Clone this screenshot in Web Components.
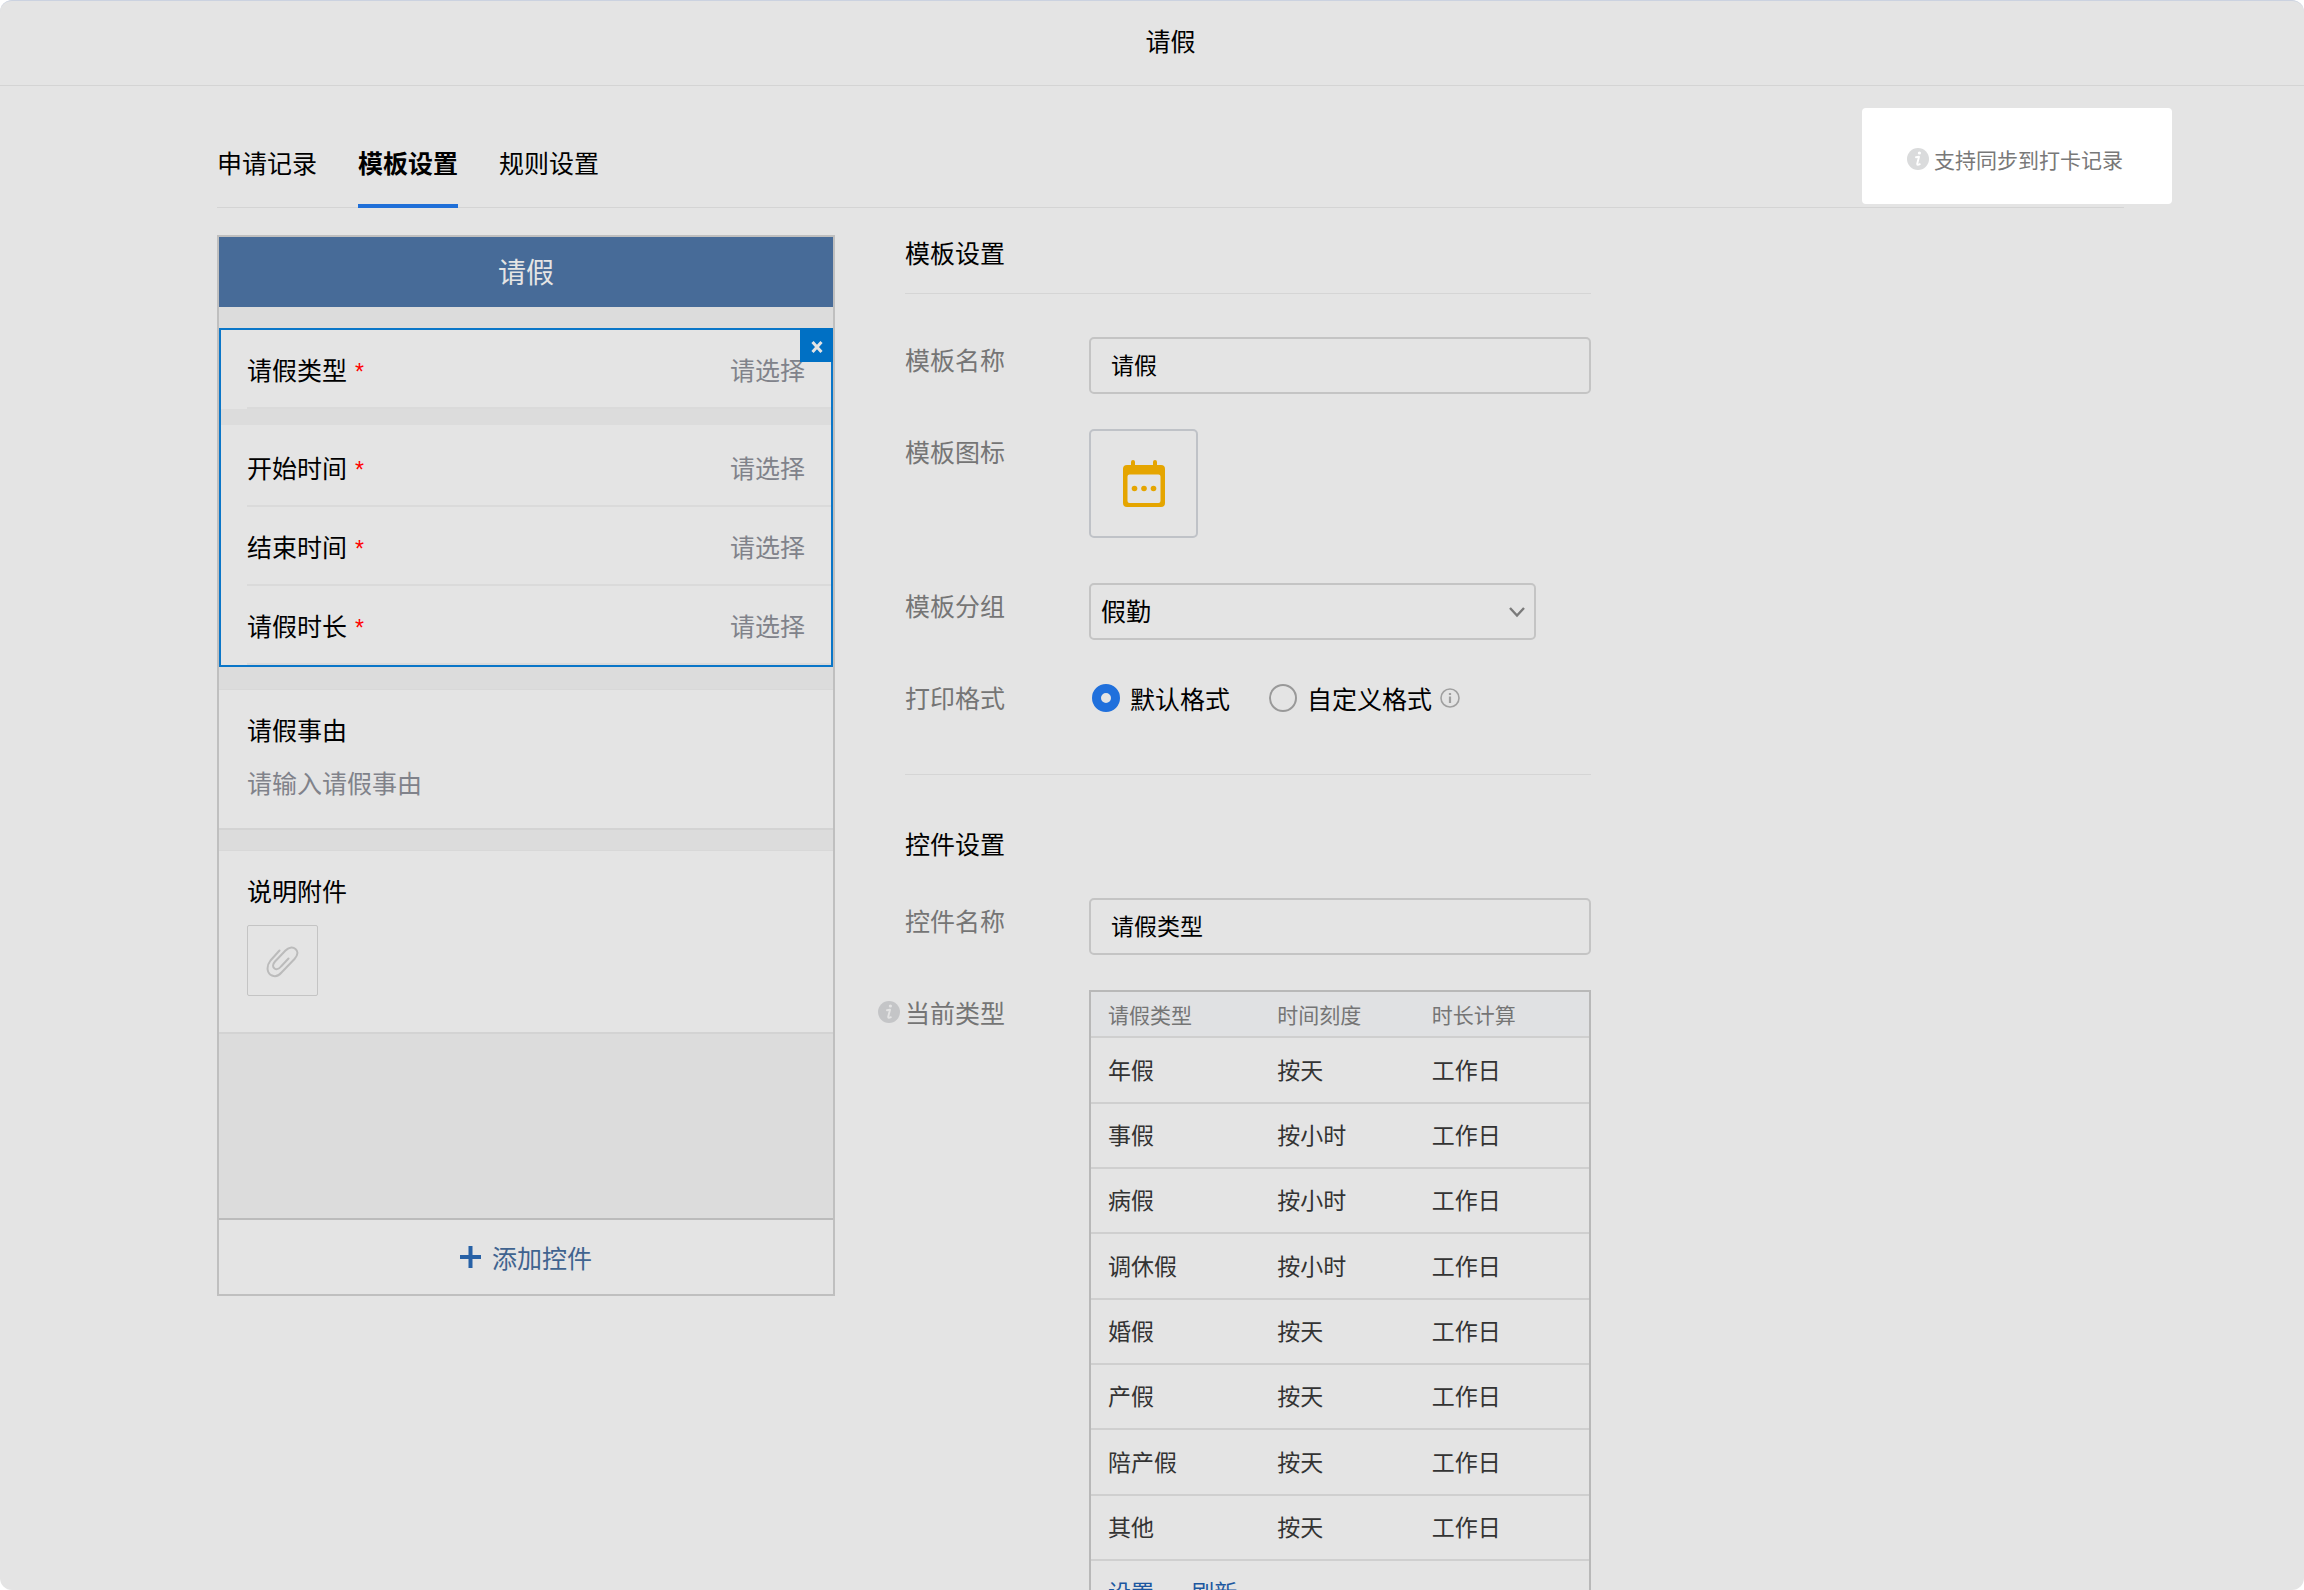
<!DOCTYPE html>
<html lang="zh-CN">
<head>
<meta charset="utf-8">
<title>请假</title>
<style>
    body {
        margin: 0;
        background: #fff;
        color: #000;
        font-family: "Noto Sans CJK SC", "Liberation Sans", sans-serif;
        font-size: 25px;
        line-height: 34px;
    }
</style>
</head>
<body>
<leave-dialog>
    <span slot="title">请假</span>
    <tab-bar slot="tabs"></tab-bar>
    <form-preview></form-preview>
    <settings-panel></settings-panel>
</leave-dialog>

<script>
class LeaveDialog extends HTMLElement {
    constructor() {
        super();
        this.attachShadow({ mode: 'open' });
        this.shadowRoot.innerHTML = `
            <style>
                :host {
                    display: block;
                    box-sizing: border-box;
                    height: 100vh;
                    overflow: hidden;
                    border-radius: 12px;
                    border-top: 1px solid #cbd2e0;
                    background: #e4e4e4;
                }
                header {
                    display: flex;
                    align-items: center;
                    justify-content: center;
                    box-sizing: border-box;
                    height: 85px;
                    padding: 0 180px 6px 217px;
                    border-bottom: 1px solid #d4d4d4;
                }
                h1 {
                    margin: 0;
                    font-size: 25px;
                    font-weight: 400;
                }
                .tabs {
                    padding: 0 180px 27px 217px;
                }
                main {
                    display: grid;
                    grid-template-columns: 618px minmax(0, 686px);
                    column-gap: 70px;
                    align-items: start;
                    padding: 0 180px 0 217px;
                }
            </style>
            <header><h1><slot name="title"></slot></h1></header>
            <div class="tabs"><slot name="tabs"></slot></div>
            <main><slot></slot></main>
        `;
    }
}

class InfoIcon extends HTMLElement {
    constructor() {
        super();
        this.attachShadow({ mode: 'open' });
        this.shadowRoot.innerHTML = `
            <style>
                :host {
                    display: inline-flex;
                    flex: none;
                    color: #c4c5c7;
                }
                svg {
                    display: block;
                }
            </style>
            <svg width="22" height="22" viewBox="0 0 22 22" aria-hidden="true">
                <circle cx="11" cy="11" r="11" fill="currentColor"/>
                <circle cx="12.4" cy="5" r="1.6" fill="var(--mark, #e4e4e4)"/>
                <path d="M9 9.300 12 8.800 10.200 15.800Q10 17.600 12.800 16.200" fill="none" stroke="var(--mark, #e4e4e4)" stroke-width="1.900" stroke-linecap="round" stroke-linejoin="round"/>
            </svg>
        `;
    }
}

class TabBar extends HTMLElement {
    constructor() {
        super();
        this.attachShadow({ mode: 'open' });
        this.shadowRoot.innerHTML = `
            <style>
                :host {
                    display: block;
                }
                nav {
                    display: flex;
                    align-items: flex-end;
                    gap: 41px;
                    height: 121px;
                    border-bottom: 1px solid #d4d4d4;
                }
                button {
                    margin: 0 0 -1px;
                    padding: 0 0 25px;
                    border: 0;
                    border-bottom: 4px solid transparent;
                    background: none;
                    color: inherit;
                    font: inherit;
                    cursor: pointer;
                }
                .active {
                    border-color: #1f6fd8;
                    font-weight: 700;
                }
                .note {
                    display: flex;
                    align-items: center;
                    gap: 5px;
                    box-sizing: border-box;
                    height: 96px;
                    margin: 0 -48px 3px auto;
                    padding: 6px 49px 0 45px;
                    border-radius: 4px;
                    background: #fff;
                    color: #787878;
                    font-size: 21px;
                    --mark: #fff;
                }
                .note info-icon {
                    color: #dadbdc;
                }
            </style>
            <nav>
                <button type="button">申请记录</button>
                <button type="button" class="active">模板设置</button>
                <button type="button">规则设置</button>
                <div class="note"><info-icon></info-icon><span>支持同步到打卡记录</span></div>
            </nav>
        `;
    }
}

class PreviewRow extends HTMLElement {
    constructor() {
        super();
        this.attachShadow({ mode: 'open' });
        this.shadowRoot.innerHTML = `
            <style>
                :host {
                    display: block;
                    padding-left: 26px;
                    background: #e4e4e4;
                }
                .row {
                    display: flex;
                    align-items: center;
                    box-sizing: border-box;
                    height: 79px;
                    padding-right: 26px;
                    border-bottom: 2px solid #dadada;
                }
                .star {
                    margin-left: 8px;
                    padding-top: 7px;
                    color: #f00;
                    font-family: "Liberation Sans", sans-serif;
                    font-size: 23px;
                }
                .hint {
                    margin-left: auto;
                    color: #80828a;
                }
            </style>
            <div class="row">
                <slot></slot><span class="star">*</span>
                <span class="hint">请选择</span>
            </div>
        `;
    }
}

class FormPreview extends HTMLElement {
    constructor() {
        super();
        this.attachShadow({ mode: 'open' });
        this.shadowRoot.innerHTML = `
            <style>
                :host {
                    display: block;
                    border: 2px solid #bfbfbf;
                    background: #dcdcdc;
                }
                h2, h3 {
                    margin: 0;
                    font-size: 25px;
                    font-weight: 400;
                }
                h2 {
                    height: 70px;
                    margin-bottom: 21px;
                    background: #476b98;
                    color: #e4e4e4;
                    font-size: 28px;
                    line-height: 68px;
                    text-align: center;
                }
                .selected {
                    position: relative;
                    border: 2px solid #0a76c8;
                }
                .group {
                    margin-top: 16px;
                    padding-top: 3px;
                    background: #e4e4e4;
                }
                .close {
                    position: absolute;
                    top: -2px;
                    right: -2px;
                    display: flex;
                    align-items: center;
                    justify-content: center;
                    width: 33px;
                    height: 34px;
                    padding: 4px 0 0;
                    border: 0;
                    background: #0070c4;
                    cursor: pointer;
                }
                section {
                    box-sizing: border-box;
                    margin-top: 20px;
                    padding: 22px 28px 0;
                    border-top: 1px solid #d8d8d8;
                    border-bottom: 2px solid #d3d3d3;
                    background: #e4e4e4;
                }
                .reason {
                    margin-top: 22px;
                    padding-bottom: 29px;
                }
                .reason p {
                    margin: 19px 0 0;
                    color: #80828a;
                }
                .files {
                    padding-bottom: 36px;
                }
                .attach {
                    display: flex;
                    align-items: center;
                    justify-content: center;
                    width: 71px;
                    height: 71px;
                    margin-top: 18px;
                    padding: 0;
                    border: 1px solid #c4c4c4;
                    border-radius: 2px;
                    background: none;
                }
                .add {
                    display: flex;
                    align-items: center;
                    justify-content: center;
                    gap: 11px;
                    width: 100%;
                    height: 76px;
                    margin-top: 184px;
                    padding: 0;
                    border: 0;
                    border-top: 2px solid #bbb;
                    background: #e4e4e4;
                    color: #40638f;
                    font: inherit;
                    cursor: pointer;
                }
            </style>
            <h2>请假</h2>
            <div class="selected">
                <preview-row>请假类型</preview-row>
                <div class="group">
                    <preview-row>开始时间</preview-row>
                    <preview-row>结束时间</preview-row>
                    <preview-row>请假时长</preview-row>
                </div>
                <button type="button" class="close" aria-label="删除">
                    <svg width="12" height="12" viewBox="0 0 12 12"><path d="M1.5 1 10.5 11M10.5 1 1.5 11" stroke="#e4e4e4" stroke-width="3"/></svg>
                </button>
            </div>
            <section class="reason">
                <h3>请假事由</h3>
                <p>请输入请假事由</p>
            </section>
            <section class="files">
                <h3>说明附件</h3>
                <button type="button" class="attach" aria-label="添加附件">
                    <svg width="34" height="34" viewBox="0 0 34 34" fill="none" stroke="#bbb" stroke-width="2" stroke-linecap="round" stroke-linejoin="round">
                        <path d="M13.5 6.5 4.5 16.5C-.5 23 1.5 30 6 31.5C9.5 33 13 31.5 15.5 28.5L28.5 15C32.5 10.5 32 7 29.5 5C26.5 2.5 22.5 3.5 19.5 6.5L9 17.5C6.5 20.5 6.5 23 8.5 24.5C10.5 26 13 25 15 22.5L22.5 14.5"/>
                    </svg>
                </button>
            </section>
            <button type="button" class="add">
                <svg width="21" height="22" viewBox="0 0 21 22" aria-hidden="true"><path d="M10.5 0V22M0 11H21" stroke="#2761a6" stroke-width="4"/></svg>
                添加控件
            </button>
        `;
    }
}

// label on the left, control on the right
class FieldRow extends HTMLElement {
    constructor() {
        super();
        this.attachShadow({ mode: 'open' });
        this.shadowRoot.innerHTML = `
            <style>
                :host {
                    display: grid;
                    grid-template-columns: 184px minmax(0, 1fr);
                    align-items: start;
                    margin-bottom: 35px;
                }
                .label {
                    display: flex;
                    align-items: center;
                    padding-top: 5px;
                    color: #757575;
                }
                ::slotted(info-icon) {
                    margin: 0 5px 0 -27px;
                }
            </style>
            <div class="label"><slot name="label"></slot></div>
            <div><slot></slot></div>
        `;
    }
}

const TYPES = [
    ['年假', '按天'],
    ['事假', '按小时'],
    ['病假', '按小时'],
    ['调休假', '按小时'],
    ['婚假', '按天'],
    ['产假', '按天'],
    ['陪产假', '按天'],
    ['其他', '按天']
];

class TypeTable extends HTMLElement {
    constructor() {
        super();
        this.attachShadow({ mode: 'open' });
        this.shadowRoot.innerHTML = `
            <style>
                :host {
                    display: block;
                    border: 2px solid #b8b8b8;
                }
                table {
                    width: 100%;
                    border-collapse: collapse;
                    table-layout: fixed;
                    color: #333;
                    font-size: 23px;
                }
                th, td {
                    box-sizing: border-box;
                    height: 65px;
                    padding: 0 0 3px 17px;
                    border-bottom: 2px solid #cfcfcf;
                    text-align: left;
                }
                tbody tr:nth-child(3n + 1) td {
                    height: 66px;
                }
                th {
                    height: 45px;
                    padding-bottom: 0;
                    background: #e0e1e3;
                    color: #757575;
                    font-size: 21px;
                    font-weight: 400;
                }
                th:nth-child(1) {
                    width: 34%;
                }
                th:nth-child(2) {
                    width: 31%;
                }
                a {
                    margin-right: 32px;
                    color: #1c57a0;
                    text-decoration: none;
                }
            </style>
            <table>
                <thead><tr><th>请假类型</th><th>时间刻度</th><th>时长计算</th></tr></thead>
                <tbody>
                    ${TYPES.map(([name, unit]) => `<tr><td>${name}</td><td>${unit}</td><td>工作日</td></tr>`).join('')}
                </tbody>
                <tfoot><tr><td colspan="3"><a href="#">设置</a> <a href="#">刷新</a></td></tr></tfoot>
            </table>
        `;
    }
}

class SettingsPanel extends HTMLElement {
    constructor() {
        super();
        this.attachShadow({ mode: 'open' });
        this.shadowRoot.innerHTML = `
            <style>
                :host {
                    display: block;
                }
                h2 {
                    margin: 0 0 38px;
                    font-size: 25px;
                    font-weight: 400;
                }
                .top h2 {
                    margin-bottom: 43px;
                    padding-bottom: 24px;
                    border-bottom: 1px solid #d5d5d5;
                }
                .top {
                    margin-bottom: 51px;
                    padding-bottom: 18px;
                    border-bottom: 1px solid #d5d5d5;
                }
                input[type="text"], select {
                    display: block;
                    box-sizing: border-box;
                    width: 100%;
                    height: 57px;
                    padding: 0 20px 3px;
                    border: 2px solid #c4c4c4;
                    border-radius: 5px;
                    outline: 0;
                    background: none;
                    color: #000;
                    font: inherit;
                    font-size: 23px;
                }
                .select {
                    position: relative;
                    max-width: 447px;
                }
                select {
                    appearance: none;
                    padding: 0 10px 3px;
                    font-size: 25px;
                }
                .select svg {
                    position: absolute;
                    top: 23px;
                    right: 11px;
                    pointer-events: none;
                }
                .icon-row {
                    margin-bottom: 45px;
                }
                .icon {
                    display: flex;
                    align-items: center;
                    justify-content: center;
                    width: 109px;
                    height: 109px;
                    padding: 0;
                    border: 2px solid #bfc2c7;
                    border-radius: 5px;
                    background: none;
                }
                .radios {
                    display: flex;
                    align-items: center;
                    padding: 6px 0 6px 3px;
                }
                .radios label {
                    display: flex;
                    align-items: center;
                    gap: 10px;
                    margin-right: 39px;
                }
                .radios label:nth-of-type(2) {
                    margin-right: 8px;
                }
                input[type="radio"] {
                    appearance: none;
                    box-sizing: border-box;
                    width: 28px;
                    height: 28px;
                    margin: 0;
                    border: 2px solid #999;
                    border-radius: 50%;
                }
                input[type="radio"]:checked {
                    border: 9px solid #2070dc;
                }
            </style>
            <div class="top">
                <h2>模板设置</h2>
                <field-row>
                    <label slot="label" for="template-name">模板名称</label>
                    <input type="text" id="template-name" value="请假">
                </field-row>
                <field-row class="icon-row">
                    <span slot="label">模板图标</span>
                    <button type="button" class="icon" aria-label="模板图标">
                        <svg width="44" height="48" viewBox="0 0 44 48" fill="#e5a500">
                            <path fill-rule="evenodd" d="M9 2a2 2 0 0 1 4 0v3h18V2a2 2 0 0 1 4 0v3h4a4 4 0 0 1 4 4v34a4 4 0 0 1-4 4H5a4 4 0 0 1-4-4V9a4 4 0 0 1 4-4h4zM5.5 16.5v24.500a2 2 0 0 0 2 2h29a2 2 0 0 0 2-2V16.500a2 2 0 0 0-2-2h-29a2 2 0 0 0-2 2z"/>
                            <circle cx="12.5" cy="28.5" r="2.8"/>
                            <circle cx="22" cy="28.5" r="2.8"/>
                            <circle cx="31.5" cy="28.5" r="2.8"/>
                        </svg>
                    </button>
                </field-row>
                <field-row>
                    <label slot="label" for="template-group">模板分组</label>
                    <div class="select">
                        <select id="template-group"><option>假勤</option></select>
                        <svg width="16" height="12" viewBox="0 0 16 12" fill="none" stroke="#7a7a7a" stroke-width="2.4"><path d="M1 2 8 9.5 15 2"/></svg>
                    </div>
                </field-row>
                <field-row>
                    <span slot="label">打印格式</span>
                    <div class="radios">
                        <label><input type="radio" name="print" checked>默认格式</label>
                        <label><input type="radio" name="print">自定义格式</label>
                        <svg width="20" height="20" viewBox="0 0 20 20" aria-hidden="true">
                            <circle cx="10" cy="10" r="9" fill="none" stroke="#a0a0a0" stroke-width="1.6"/>
                            <path d="M10 8.5V15M10 5V7" stroke="#a0a0a0" stroke-width="2.2"/>
                        </svg>
                    </div>
                </field-row>
            </div>
            <h2>控件设置</h2>
            <field-row>
                <label slot="label" for="control-name">控件名称</label>
                <input type="text" id="control-name" value="请假类型">
            </field-row>
            <field-row>
                <info-icon slot="label"></info-icon>
                <span slot="label">当前类型</span>
                <type-table></type-table>
            </field-row>
        `;
    }
}

window.customElements.define('info-icon', InfoIcon);
window.customElements.define('leave-dialog', LeaveDialog);
window.customElements.define('tab-bar', TabBar);
window.customElements.define('preview-row', PreviewRow);
window.customElements.define('form-preview', FormPreview);
window.customElements.define('field-row', FieldRow);
window.customElements.define('type-table', TypeTable);
window.customElements.define('settings-panel', SettingsPanel);
</script>
</body>
</html>
